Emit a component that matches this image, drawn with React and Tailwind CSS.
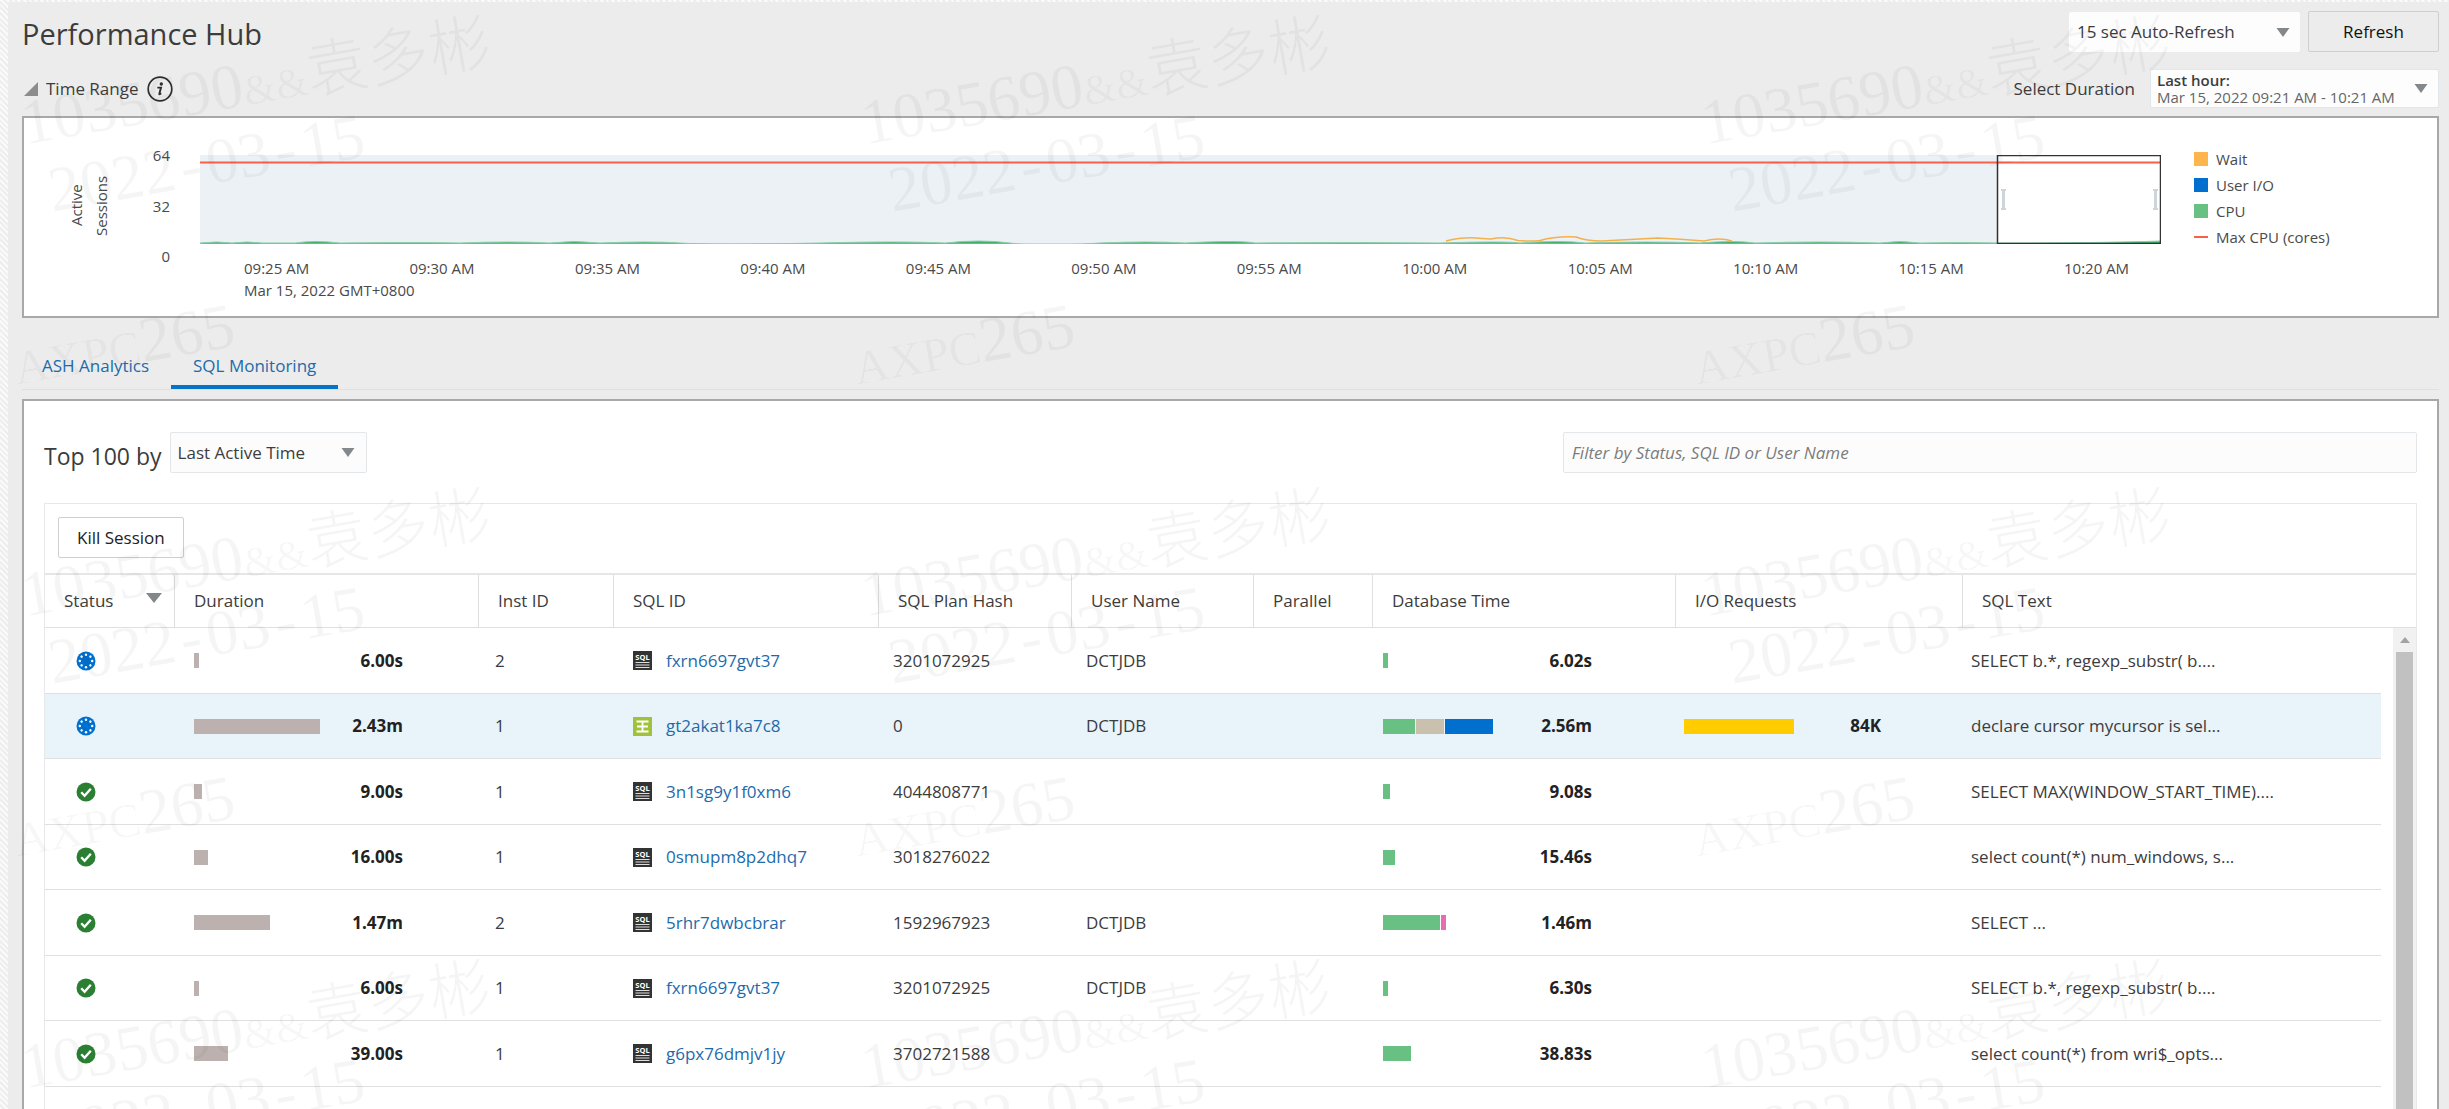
import React from "react";

const ticks = ["09:30 AM", "09:35 AM", "09:40 AM", "09:45 AM", "09:50 AM", "09:55 AM", "10:00 AM", "10:05 AM", "10:10 AM", "10:15 AM"];

const GREEN = "#68c182";
const rows = [
  { status: "running", duration: "6.00s", durationBar: 5, inst: "2", kind: "sql", sqlId: "fxrn6697gvt37", hash: "3201072925", user: "DCTJDB", db: "6.02s", dbBar: [[5, GREEN]], text: "SELECT b.*, regexp_substr( b...." },
  { status: "running", duration: "2.43m", durationBar: 126, inst: "1", kind: "plsql", sqlId: "gt2akat1ka7c8", hash: "0", user: "DCTJDB", db: "2.56m", dbBar: [[32, GREEN], [28, "#c9c0ae"], [48, "#006fcd"]], io: "84K", text: "declare cursor mycursor is sel...", selected: true },
  { status: "done", duration: "9.00s", durationBar: 8, inst: "1", kind: "sql", sqlId: "3n1sg9y1f0xm6", hash: "4044808771", user: "", db: "9.08s", dbBar: [[7, GREEN]], text: "SELECT MAX(WINDOW_START_TIME)...." },
  { status: "done", duration: "16.00s", durationBar: 14, inst: "1", kind: "sql", sqlId: "0smupm8p2dhq7", hash: "3018276022", user: "", db: "15.46s", dbBar: [[12, GREEN]], text: "select count(*) num_windows, s..." },
  { status: "done", duration: "1.47m", durationBar: 76, inst: "2", kind: "sql", sqlId: "5rhr7dwbcbrar", hash: "1592967923", user: "DCTJDB", db: "1.46m", dbBar: [[57, GREEN], [5, "#e56db1"]], text: "SELECT ..." },
  { status: "done", duration: "6.00s", durationBar: 5, inst: "1", kind: "sql", sqlId: "fxrn6697gvt37", hash: "3201072925", user: "DCTJDB", db: "6.30s", dbBar: [[5, GREEN]], text: "SELECT b.*, regexp_substr( b...." },
  { status: "done", duration: "39.00s", durationBar: 34, inst: "1", kind: "sql", sqlId: "g6px76dmjv1jy", hash: "3702721588", user: "", db: "38.83s", dbBar: [[28, GREEN]], text: "select count(*) from wri$_opts..." },
];

const Caret = ({ className = "" }) => (
  <svg viewBox="0 0 14 9" className={`h-[9px] w-3.5 fill-[#85888a] ${className}`} aria-hidden="true">
    <path d="M0.500 0h13L7 9z" />
  </svg>
);

function StatusIcon({ status }) {
  if (status === "running") {
    return (
      <svg viewBox="0 0 20 20" className="size-5" role="img" aria-label="Running">
        <circle cx="10" cy="10" r="9.5" fill="#0070d0" />
        {[0, 45, 90, 135, 180, 225, 270, 315].map((a) => (
          <circle key={a} cx="10" cy="3.800" r="1.2" fill="#fff" transform={`rotate(${a} 10 10)`} />
        ))}
      </svg>
    );
  }
  return (
    <svg viewBox="0 0 20 20" className="size-5" role="img" aria-label="Completed">
      <circle cx="10" cy="10" r="9.5" fill="#2a7f33" />
      <path d="M5.2 10.2l3.4 3.6 6.2-7" fill="none" stroke="#fff" strokeWidth="2.4" />
    </svg>
  );
}

function KindIcon({ kind }) {
  if (kind === "plsql") {
    return (
      <svg viewBox="0 0 19 19" className="size-[19px] shrink-0" aria-hidden="true">
        <rect width="19" height="19" fill="#a0c13a" />
        <path d="M3.500 4.500h12M4 9.500h11M3.500 14.500h12M9.500 4.500v10" fill="none" stroke="#fff" strokeWidth="1.800" />
      </svg>
    );
  }
  return (
    <svg viewBox="0 0 19 19" className="size-[19px] shrink-0" aria-hidden="true">
      <rect width="19" height="19" fill="#333" />
      <text x="9.500" y="8.500" textAnchor="middle" fontSize="7.500" fontWeight="700" fill="#fff" fontFamily="Open Sans, sans-serif">SQL</text>
      <path d="M2.500 11.500h14M2.500 14h14M2.500 16.500h14" stroke="#ddd" strokeWidth="1.100" />
    </svg>
  );
}

function Bars({ segments }) {
  return (
    <div className="flex gap-px">
      {segments.map(([w, c], i) => (
        <div key={i} className="h-[15px]" style={{ width: w, backgroundColor: c }} />
      ))}
    </div>
  );
}

function Watermark() {
  return (
    <div className="pointer-events-none absolute inset-0 overflow-hidden" aria-hidden="true">
      <div className="-ml-[34px] grid auto-rows-[472px] grid-cols-[repeat(3,840px)] pt-24 font-['Liberation_Serif','Noto_Sans_CJK_SC',serif] text-[64px] leading-none whitespace-nowrap text-black/4">
        {Array.from({ length: 9 }, (_, i) => (
          <div key={i} className="origin-top-left -rotate-10">
            <div className="flex h-16 items-baseline pl-[50px]">
              <span>1035690</span>
              <span className="text-[42px]">&amp;&amp;</span>
              <span className="font-['Noto_Sans_CJK_SC',sans-serif] text-[62px] font-light">袁多彬</span>
            </div>
            <div className="mt-3 flex h-16 items-baseline pl-[65px]">
              <span>2022</span>
              <span className="w-8 text-center">-</span>
              <span>03</span>
              <span className="w-8 text-center">-</span>
              <span>15</span>
            </div>
            <div className="mt-[100px] flex h-16 items-baseline">
              <span className="text-5xl">AXPC</span>
              <span>265</span>
            </div>
          </div>
        ))}
      </div>
    </div>
  );
}

function Chart() {
  return (
    <section aria-label="Active sessions" className="flex border-2 border-[#a8a8a8] bg-white pt-[27px] pb-[15px] text-[15px] text-[#4a4a4a]">
      <div className="flex h-[121px] w-[146px] shrink-0 justify-between pl-10">
        <div className="rotate-180 text-center leading-[25px] [writing-mode:vertical-rl]">
          Active
          <br />
          Sessions
        </div>
        <div className="flex flex-col justify-between text-right leading-5">
          <span>64</span>
          <span>32</span>
          <span>0</span>
        </div>
      </div>
      <div className="ml-[30px] min-w-0 flex-1 pt-2.5">
        <svg viewBox="0 0 1961 89" preserveAspectRatio="none" className="block h-[89px] w-full">
          <rect width="1961" height="89" fill="#ecf1f6" />
          <rect x="1797" width="164" height="89" fill="#fff" />
          <path d="M0 88Q17 86 32 88Q47 86 62 88Q90 88 95 88Q115 85 140 88Q220 87 260 88Q310 86 350 88Q374 85 400 88Q450 86 480 88T620 88Q700 86 745 88Q780 84 810 88T900 88Q950 86 985 88Q1038 85 1055 88Q1150 87 1240 88Q1305 86 1320 88Q1363 85 1385 88Q1450 86 1500 88Q1535 85 1555 88Q1620 86 1680 88Q1700 85 1720 88Q1760 87 1800 88Q1900 88 1961 86V89H0z" fill="#3fb06a" stroke="#8ccdaa" strokeWidth="1" />
          <path d="M1246 86Q1262 82 1276 83T1291 84Q1305 81 1318 85.500Q1330 86.500 1340 85.500Q1356 81 1376 82Q1386 86 1402 86Q1440 84 1458 83Q1480 84 1504 86Q1520 82 1532 86" fill="none" stroke="#f5b04e" strokeWidth="1.500" />
          <path d="M0 7.500H1961" stroke="#f9604a" strokeWidth="2" />
          <rect x="1797.500" y="0.500" width="163" height="88" fill="none" stroke="#333" strokeWidth="1.500" />
          <path d="M1801 34h5v2h-1v17h1v2h-5v-2h1V36h-1zM1953 34h5v2h-1v17h1v2h-5v-2h1V36h-1z" fill="#cdd4da" />
        </svg>
        <div className="flex pt-[13px] pl-11 leading-[22px] whitespace-nowrap">
          <div className="w-0 flex-1">
            09:25 AM
            <br />
            Mar 15, 2022 GMT+0800
          </div>
          {ticks.map((t) => (
            <div key={t} className="w-0 flex-1">{t}</div>
          ))}
          <div className="w-[97px]">10:20 AM</div>
        </div>
      </div>
      <ul className="w-[276px] shrink-0 pt-px pl-[33px] leading-[26px]">
        {[["Wait", "bg-[#ffb54d]"], ["User I/O", "bg-[#006fcd]"], ["CPU", "bg-[#68c182]"]].map(([label, bg]) => (
          <li key={label} className="flex items-center gap-2">
            <span className={`size-3.5 ${bg}`} />
            {label}
          </li>
        ))}
        <li className="flex items-center gap-2">
          <span className="h-0.5 w-3.5 bg-[#f9604a]" />
          Max CPU (cores)
        </li>
      </ul>
    </section>
  );
}

const th = "border-r border-b border-[#dfdfdf] pl-[19px] text-left font-normal";
const td = "border-b border-[#dfdfdf]";

function MonitorTable() {
  return (
    <table className="w-full table-fixed border-separate border-spacing-0 border-t-2 border-[#e6e6e6]">
      <colgroup>
        <col className="w-[130px]" />
        <col className="w-[304px]" />
        <col className="w-[135px]" />
        <col className="w-[265px]" />
        <col className="w-[193px]" />
        <col className="w-[182px]" />
        <col className="w-[119px]" />
        <col className="w-[303px]" />
        <col className="w-[287px]" />
        <col />
        <col className="w-[35px]" />
      </colgroup>
      <thead>
        <tr className="h-[53px]">
          <th scope="col" className={th}>
            <div className="flex items-center justify-between pr-3">
              Status
              <button type="button" aria-label="Sort by status" className="pb-1.5">
                <svg viewBox="0 0 16 10" className="h-2.5 w-4 fill-[#85888a]" aria-hidden="true"><path d="M0 0h16L8 10z" /></svg>
              </button>
            </div>
          </th>
          {["Duration", "Inst ID", "SQL ID", "SQL Plan Hash", "User Name", "Parallel", "Database Time", "I/O Requests"].map((h) => (
            <th key={h} scope="col" className={th}>{h}</th>
          ))}
          <th scope="col" colSpan={2} className="border-b border-[#dfdfdf] pl-[19px] text-left font-normal">SQL Text</th>
        </tr>
      </thead>
      <tbody>
        {rows.map((r, i) => (
          <tr key={i} className="odd:h-[66px] even:h-[65px]">
            <td className={`${td} pl-[31px] ${r.selected ? "bg-[#e8f3fa]" : ""}`}><StatusIcon status={r.status} /></td>
            <td className={`${td} pl-[19px] ${r.selected ? "bg-[#e8f3fa]" : ""}`}>
              <div className="flex w-[209px] items-center justify-between">
                <Bars segments={[[r.durationBar, "#bcb1ae"]]} />
                <span className="font-bold text-[#222]">{r.duration}</span>
              </div>
            </td>
            <td className={`${td} pl-4 ${r.selected ? "bg-[#e8f3fa]" : ""}`}>{r.inst}</td>
            <td className={`${td} pl-[19px] ${r.selected ? "bg-[#e8f3fa]" : ""}`}>
              <div className="flex items-center gap-3.5">
                <KindIcon kind={r.kind} />
                <a href="#sql" className="text-[#1d6bab]">{r.sqlId}</a>
              </div>
            </td>
            <td className={`${td} pl-3.5 ${r.selected ? "bg-[#e8f3fa]" : ""}`}>{r.hash}</td>
            <td className={`${td} pl-3.5 ${r.selected ? "bg-[#e8f3fa]" : ""}`}>{r.user}</td>
            <td className={`${td} ${r.selected ? "bg-[#e8f3fa]" : ""}`} />
            <td className={`${td} pl-2.5 ${r.selected ? "bg-[#e8f3fa]" : ""}`}>
              <div className="flex w-[209px] items-center justify-between">
                <Bars segments={r.dbBar} />
                <span className="font-bold text-[#222]">{r.db}</span>
              </div>
            </td>
            <td className={`${td} pl-2 ${r.selected ? "bg-[#e8f3fa]" : ""}`}>
              {r.io && (
                <div className="flex w-[197px] items-center justify-between">
                  <Bars segments={[[110, "#ffcc00"]]} />
                  <span className="font-bold text-[#222]">{r.io}</span>
                </div>
              )}
            </td>
            <td className={`${td} pl-2 ${r.selected ? "bg-[#e8f3fa]" : ""}`}>{r.text}</td>
            {i === 0 && (
              <td rowSpan={8} className="h-px p-0">
                <div className="ml-auto flex h-full w-[23px] flex-col items-center bg-[#f1f1f1]" aria-hidden="true">
                  <svg viewBox="0 0 10 6" className="my-[9px] h-1.5 w-2.5 shrink-0 fill-[#a3a3a3]"><path d="M0 6h10L5 0z" /></svg>
                  <div className="w-[17px] flex-1 bg-[#c1c1c1]" />
                </div>
              </td>
            )}
          </tr>
        ))}
        <tr className="h-[65px]"><td colSpan={10} className={td} /></tr>
      </tbody>
    </table>
  );
}

export default function App() {
  return (
    <div className="relative h-screen overflow-hidden bg-[repeating-linear-gradient(45deg,#fafafa_0_2px,#eeeeee_2px_4px)] pt-0.5 pl-2 font-['Open_Sans',sans-serif] text-[17px] text-[#3c3c3c]">
      <main className="flex h-full flex-col bg-[#ececec] pr-2.5 pl-3.5">
        <header className="flex items-center justify-between pt-[9px]">
          <h1 className="pt-1 text-[29px] leading-9">Performance Hub</h1>
          <div className="flex items-center gap-2">
            <div className="relative">
              <select aria-label="Auto refresh" className="h-10 w-[231px] appearance-none rounded-xs bg-[#fdfdfd] pl-2">
                <option>15 sec Auto-Refresh</option>
              </select>
              <Caret className="pointer-events-none absolute top-4 right-2.5" />
            </div>
            <button type="button" className="h-[41px] w-[131px] rounded-xs border border-[#cfcfcf] text-[#111]">Refresh</button>
          </div>
        </header>

        <div className="mt-[17px] mb-2 flex items-center justify-between">
          <div className="flex items-center">
            <button type="button" className="flex items-center gap-2 pl-0.5">
              <svg viewBox="0 0 14 14" className="size-3.5 fill-[#8c8c8c]" aria-hidden="true"><path d="M14 0v14H0z" /></svg>
              Time Range
            </button>
            <button type="button" aria-label="About time range" className="ml-2">
              <svg viewBox="0 0 26 26" className="size-[26px]" aria-hidden="true">
                <circle cx="13" cy="13" r="11.800" fill="none" stroke="#2e2e2e" strokeWidth="1.700" />
                <circle cx="14.300" cy="8" r="1.700" fill="#2e2e2e" />
                <path d="M10.300 11.600h3.700l-1.700 6.300q-.2.900 1.900-.7" fill="none" stroke="#2e2e2e" strokeWidth="1.900" />
              </svg>
            </button>
          </div>
          <div className="flex items-center gap-[15px]">
            <label htmlFor="duration">Select Duration</label>
            <button id="duration" type="button" className="flex h-[39px] w-[289px] items-center justify-between rounded-xs border border-[#e0e6ea] bg-[#fdfdfd] pr-2.5 pl-1.5 text-left text-[15px] leading-[17px]">
              <span>
                <span className="block font-semibold">Last hour:</span>
                <span className="block text-[#666]">Mar 15, 2022 09:21 AM - 10:21 AM</span>
              </span>
              <Caret className="shrink-0" />
            </button>
          </div>
        </div>

        <Chart />

        <div role="tablist" className="mt-6 flex h-12 border-b border-[#dbe1e6] text-[#1d6bab]">
          <button type="button" role="tab" aria-selected="false" className="pr-[22px] pl-5">ASH Analytics</button>
          <button type="button" role="tab" aria-selected="true" className="border-b-4 border-[#0374c9] px-[22px] pt-1">SQL Monitoring</button>
        </div>

        <section className="mt-[9px] flex-1 overflow-hidden border-2 border-b-0 border-[#a8a8a8] bg-white px-5 pt-[31px]">
          <div className="flex items-center justify-between">
            <div className="flex items-center gap-2">
              <label htmlFor="topby" className="pt-1.5 text-[23px] leading-8">Top 100 by</label>
              <div className="relative">
                <select id="topby" className="h-[41px] w-[197px] appearance-none rounded-xs border border-[#e4e7ea] bg-[#fcfcfc] pl-[7px]">
                  <option>Last Active Time</option>
                </select>
                <Caret className="pointer-events-none absolute top-4 right-3" />
              </div>
            </div>
            <input aria-label="Filter" placeholder="Filter by Status, SQL ID or User Name" className="h-[41px] w-[36%] rounded-xs border border-[#e4e7ea] bg-[#fcfcfc] px-2 placeholder:text-[#7c7c7c] placeholder:italic" />
          </div>
          <div className="mt-[30px] border border-b-0 border-[#e8e8e8]">
            <div className="px-[13px] pt-[13px] pb-[15px]">
              <button type="button" className="h-[41px] rounded-xs border border-[#cfcfcf] bg-white px-[18px] text-[#222]">Kill Session</button>
            </div>
            <MonitorTable />
          </div>
        </section>
      </main>
      <Watermark />
    </div>
  );
}
